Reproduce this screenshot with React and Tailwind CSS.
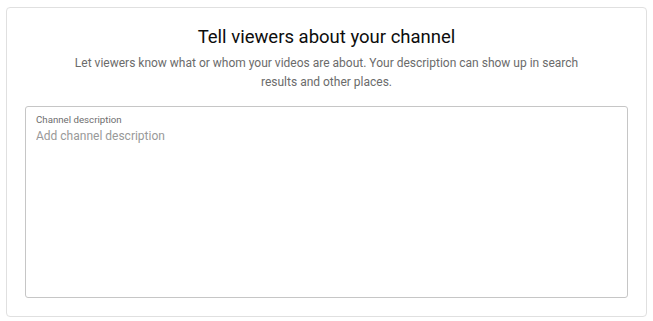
import React, { useState } from "react";

export default function App() {
  const [description, setDescription] = useState("");

  return (
    <div className="w-[653px] h-[321px] bg-white pt-[7px] pl-[6px]" style={{ fontFamily: "Roboto, 'Noto Sans', sans-serif" }}>
      <div className="w-[641px] h-[310px] border border-[#e0e0e0] rounded-[4px] px-[18px] pt-[17px] flex flex-col">
        <h2 className="text-center text-[18.5px] leading-[24px] text-[#0d0d0d]">
          Tell viewers about your channel
        </h2>
        <p className="mt-[5px] mx-auto w-[520px] text-center text-[12px] leading-[19px] text-[#6b6b6b]">
          Let viewers know what or whom your videos are about. Your description can show up in search results and other places.
        </p>
        <label className="mt-[14px] h-[192px] border border-[#c6c6c6] rounded-[3px] px-[10px] pt-[7px] flex flex-col">
          <span className="text-[9.7px] leading-[12px] text-[#6e6e6e]">Channel description</span>
          <textarea
            value={description}
            onChange={(e) => setDescription(e.target.value)}
            placeholder="Add channel description"
            className="flex-1 resize-none outline-none pt-[1px] text-[12px] leading-[19px] text-[#0d0d0d] placeholder:text-[#999999]"
          />
        </label>
      </div>
    </div>
  );
}
